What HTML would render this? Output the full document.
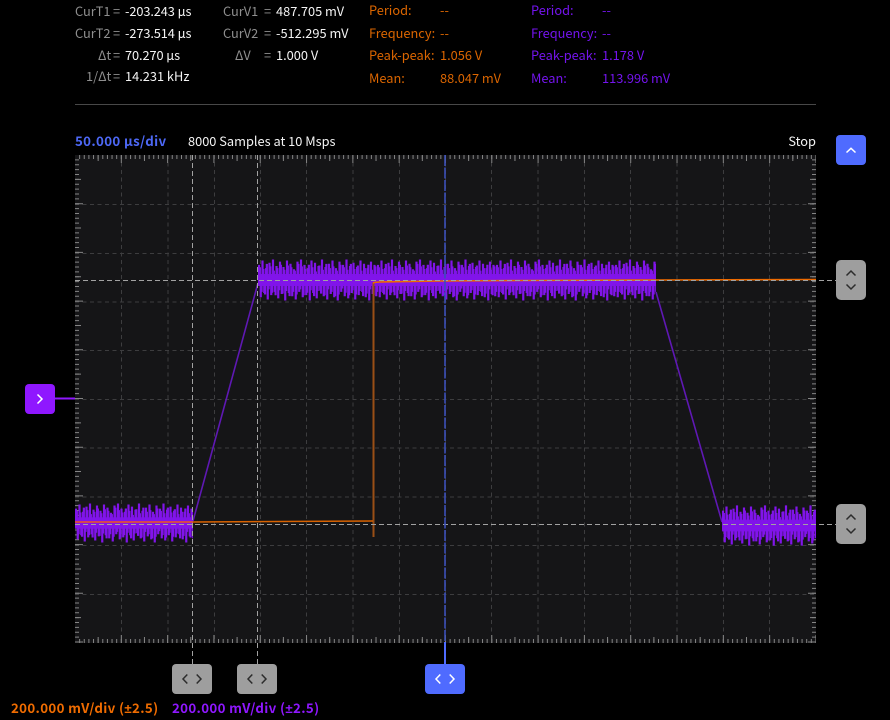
<!DOCTYPE html>
<html><head><meta charset="utf-8"><style>
html,body{margin:0;padding:0;background:#000;width:890px;height:720px;overflow:hidden}
.t{position:absolute;white-space:nowrap;font:12.8px/16px "Noto Sans CJK JP","Liberation Sans",sans-serif}
.g{color:#8f8f8f}.w{color:#f4f4f4}.o{color:#dc6600}.p{color:#7414ee}
.b{font-weight:700;font-size:13.3px;letter-spacing:.34px}
.b span{font-family:"Liberation Sans",sans-serif}
.hr{position:absolute;left:75px;top:104px;width:741px;height:1px;background:#484848}
svg{position:absolute;left:0;top:0}
</style></head><body>
<div class="t g" style="left:75px;top:3px">CurT1</div><div class="t g" style="left:113px;top:3px">=</div><div class="t w" style="left:125px;top:3px;letter-spacing:-.1px">-203.243 µs</div>
<div class="t g" style="left:75px;top:25px">CurT2</div><div class="t g" style="left:113px;top:25px">=</div><div class="t w" style="left:125px;top:25px;letter-spacing:-.1px">-273.514 µs</div>
<div class="t g" style="left:98px;top:47px">Δt</div><div class="t g" style="left:113px;top:47px">=</div><div class="t w" style="left:125px;top:47px;letter-spacing:-.1px">70.270 µs</div>
<div class="t g" style="left:86px;top:68px">1/Δt</div><div class="t g" style="left:113px;top:68px">=</div><div class="t w" style="left:125px;top:68px">14.231 kHz</div>
<div class="t g" style="left:223px;top:3px">CurV1</div><div class="t g" style="left:264px;top:3px">=</div><div class="t w" style="left:276px;top:3px">487.705 mV</div>
<div class="t g" style="left:223px;top:25px">CurV2</div><div class="t g" style="left:264px;top:25px">=</div><div class="t w" style="left:276px;top:25px">-512.295 mV</div>
<div class="t g" style="left:235px;top:47px">ΔV</div><div class="t g" style="left:264px;top:47px">=</div><div class="t w" style="left:276px;top:47px">1.000 V</div>
<div class="t o" style="left:369px;top:2px">Period:</div><div class="t o" style="left:440px;top:2px">--</div>
<div class="t o" style="left:369px;top:25px">Frequency:</div><div class="t o" style="left:440px;top:25px">--</div>
<div class="t o" style="left:369px;top:47px">Peak-peak:</div><div class="t o" style="left:440px;top:47px">1.056 V</div>
<div class="t o" style="left:369px;top:70px">Mean:</div><div class="t o" style="left:440px;top:70px">88.047 mV</div>
<div class="t p" style="left:531px;top:2px">Period:</div><div class="t p" style="left:602px;top:2px">--</div>
<div class="t p" style="left:531px;top:25px">Frequency:</div><div class="t p" style="left:602px;top:25px">--</div>
<div class="t p" style="left:531px;top:47px">Peak-peak:</div><div class="t p" style="left:602px;top:47px">1.178 V</div>
<div class="t p" style="left:531px;top:70px">Mean:</div><div class="t p" style="left:602px;top:70px">113.996 mV</div>
<div class="hr"></div>
<svg width="890" height="720" viewBox="0 0 890 720" fill="none">
<defs>
<path id="n" stroke-width="2.2" d="M1 -14V4M2.75 -4V16M4.5 -18V4M6.25 -4V12M8 -11V4M9.75 -4V18M11.5 -16V4M13.25 -4V14M15 -19V4M16.75 -4V11M18.5 -13V4M20.25 -4V17M22 -17V4M23.75 -4V13M25.5 -12V4M27.25 -4V19M29 -18V4M30.75 -4V12M32.5 -15V4M34.25 -4V15M36 -10V4M37.75 -4V18M39.5 -17V4M41.25 -4V11M43 -19V4M44.75 -4V16M46.5 -14V4M48.25 -4V14M50 -11V4M51.75 -4V19M53.5 -18V4M55.25 -4V12M57 -16V4M58.75 -4V17M60.5 -13V4M62.25 -4V10M64 -19V4M65.75 -4V15M67.5 -12V4M69.25 -4V18M71 -15V4M72.75 -4V13M74.5 -18V4M76.25 -4V16M78 -11V4M79.75 -4V19M81.5 -17V4M83.25 -4V11M85 -14V4M86.75 -4V15M88.5 -19V4M90.25 -4V17M92 -13V4M93.75 -4V12M95.5 -16V4M97.25 -4V18M99 -12V4M100.75 -4V14M102.5 -18V4M104.25 -4V11M106 -15V4M107.75 -4V16M109.5 -11V4M111.25 -4V19M113 -17V4M114.75 -4V13M116.5 -14V4M118.25 -4V15"/>
<g id="m"><rect x="0" y="-6" width="120" height="12" fill="#7a14dc" stroke="none"/><use href="#n" transform="scale(1,1.08)"/><use href="#n" transform="translate(120.1,0) scale(-1,-.85)"/></g>
<clipPath id="c1"><rect x="258" y="250" width="398" height="60"/></clipPath>
<clipPath id="c2"><rect x="722" y="495" width="94" height="60"/></clipPath>
<clipPath id="c3"><rect x="75" y="495" width="118" height="60"/></clipPath>
</defs>
<rect x="75" y="155" width="741" height="488" fill="#151517"/>
<!-- grid -->
<g stroke="#3d3d3f" stroke-width="1" stroke-dasharray="4 3.5">
<path d="M121.5 155V643M168 155V643M214.5 155V643M260.5 155V643M306.5 155V643M353 155V643M399.5 155V643M445.5 155V643M491.5 155V643M538 155V643M584.5 155V643M630.5 155V643M677 155V643M723.5 155V643M769.5 155V643"/>
<path d="M75 204.5H816M75 253.5H816M75 302H816M75 350.5H816M75 399.5H816M75 448H816M75 497H816M75 545.5H816M75 594.5H816"/>
</g>
<!-- ticks -->
<g stroke="#858585" stroke-width="1">
<path stroke-width="4" stroke-dasharray="1 3.631" d="M79.13 157H816"/>
<path stroke-width="4" stroke-dasharray="1 3.631" d="M79.13 641H816"/>
<path stroke-width="6" stroke-dasharray="1 45.31" d="M97.66 158H816"/>
<path stroke-width="6" stroke-dasharray="1 45.31" d="M97.66 640H816"/>
<path stroke-width="8" stroke-dasharray="1 45.31" d="M120.81 159H816"/>
<path stroke-width="8" stroke-dasharray="1 45.31" d="M120.81 639H816"/>
<path stroke-width="4" stroke-dasharray="1 3.87" d="M77 159.37V643"/>
<path stroke-width="4" stroke-dasharray="1 3.87" d="M814 159.37V643"/>
<path stroke-width="6" stroke-dasharray="1 47.7" d="M78 178.85V643"/>
<path stroke-width="6" stroke-dasharray="1 47.7" d="M813 178.85V643"/>
<path stroke-width="8" stroke-dasharray="1 47.7" d="M79 203.2V643"/>
<path stroke-width="8" stroke-dasharray="1 47.7" d="M812 203.2V643"/>
</g>
<!-- purple trace -->
<path d="M193 521L258 283M656 292L722 522" stroke="#5f18b4" stroke-width="1.6"/>
<g stroke="#8114ea">
<g clip-path="url(#c1)">
<use href="#m" transform="translate(258,280)"/><use href="#m" transform="translate(377,280)"/><use href="#m" transform="translate(496,280)"/><use href="#m" transform="translate(615,280)"/>
</g>
<g clip-path="url(#c3)">
<use href="#m" transform="translate(75,523) scale(1,.95)"/>
</g>
<g clip-path="url(#c2)">
<use href="#m" transform="translate(722,525.5) scale(1,.98)"/>
</g>
</g>
<!-- orange trace -->
<path d="M373.5 282V537" stroke="#9a4f16" stroke-width="2"/>
<path d="M75 522H193" stroke="#f0561e" stroke-width="1.6"/>
<path d="M193 522L373 521" stroke="#d96200" stroke-width="1.5"/>
<path d="M373 283Q375 282 380 282L440 281L520 280.5L656 280L816 279.5" stroke="#ee6a00" stroke-width="1.6"/>
<!-- cursors -->
<g stroke="#a2a2a2" stroke-width="1" stroke-dasharray="5 3">
<path d="M192.5 155V664M257.5 155V664"/>
<path d="M75 280.5H836M75 524.5H836"/>
</g>
<path d="M445 155V642" stroke="#3b4fb8" stroke-width="1.6" stroke-dasharray="11 1.5"/>
<path d="M445 642V664" stroke="#4f6bff" stroke-width="2"/>
<path d="M55 398.5H75" stroke="#8f17ff" stroke-width="2"/>
<!-- buttons -->
<rect x="836" y="135" width="30" height="30" rx="4" fill="#4f6bff"/>
<path d="M846.5 152.5L851 148.3L855.5 152.5" stroke="#fff" stroke-width="1.5"/>
<rect x="836" y="260" width="30" height="40" rx="5" fill="#9e9e9e"/>
<path d="M846.5 275.5L851 271L855.5 275.5M846.5 284.5L851 289L855.5 284.5" stroke="#2c2c2c" stroke-width="1.5"/>
<rect x="836" y="504" width="30" height="40" rx="5" fill="#9e9e9e"/>
<path d="M846.5 519.5L851 515L855.5 519.5M846.5 528.5L851 533L855.5 528.5" stroke="#2c2c2c" stroke-width="1.5"/>
<rect x="25" y="384" width="30" height="30" rx="4" fill="#8f17ff"/>
<path d="M37.5 394.5L42 399L37.5 403.5" stroke="#fff" stroke-width="1.5"/>
<rect x="172" y="664" width="40" height="30" rx="4" fill="#9e9e9e"/>
<path d="M187.3 674.5L183 679L187.3 683.5M196.7 674.5L201 679L196.7 683.5" stroke="#2c2c2c" stroke-width="1.5"/>
<rect x="237" y="664" width="40" height="30" rx="4" fill="#9e9e9e"/>
<path d="M252.3 674.5L248 679L252.3 683.5M261.7 674.5L266 679L261.7 683.5" stroke="#2c2c2c" stroke-width="1.5"/>
<rect x="425" y="664" width="40" height="30" rx="4" fill="#4f6bff"/>
<path d="M440.3 674.5L436 679L440.3 683.5M449.7 674.5L454 679L449.7 683.5" stroke="#fff" stroke-width="1.5"/>
</svg>
<div class="t b" style="left:75px;top:133px;color:#4d68f5">50.000 µs/div</div>
<div class="t w" style="left:188px;top:133px">8000 Samples at 10 Msps</div>
<div class="t w" style="right:74px;top:133px">Stop</div>
<div class="t b" style="left:11px;top:700px;color:#f06c00">200.000 mV/div (<span>±</span>2.5)</div>
<div class="t b" style="left:172px;top:700px;color:#8f17ff">200.000 mV/div (<span>±</span>2.5)</div>
</body></html>
